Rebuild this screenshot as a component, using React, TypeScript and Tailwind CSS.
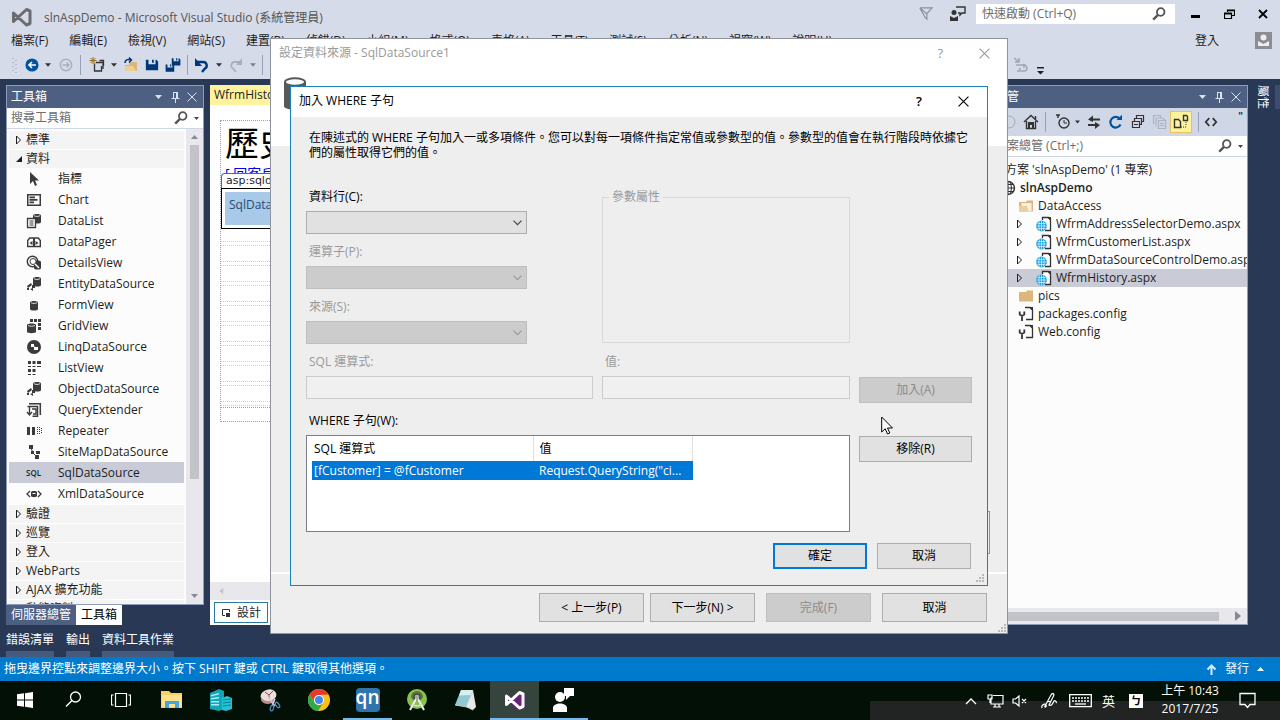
import React from "react";

type Kids = { children?: React.ReactNode };

function Svg({ s = 16, w, h, vb, className = "", children }: Kids & { s?: number; w?: number; h?: number; vb?: string; className?: string }) {
  return (
    <svg width={w ?? s} height={h ?? s} viewBox={vb ?? "0 0 16 16"} fill="none" className={"shrink-0 " + className} aria-hidden="true">
      {children}
    </svg>
  );
}

const Caret = ({ className = "" }: { className?: string }) => (
  <Svg w={7} h={4} vb="0 0 7 4" className={className}><path d="M0 0h7L3.5 4z" fill="currentColor" /></Svg>
);
const Pin = () => (
  <Svg s={11} vb="0 0 11 11"><path d="M3 .5h5M3.5.5v5.5M7.5.5v5.5M6.5.5v5.5M1.5 6.5h8M5.5 7v4" stroke="currentColor" /></Svg>
);
const Cross = ({ s = 10 }: { s?: number }) => (
  <Svg s={s} vb="0 0 10 10"><path d="M.5.5l9 9M9.5.5l-9 9" stroke="currentColor" /></Svg>
);
const Search = () => (
  <Svg s={14} vb="0 0 14 14" className="text-[#555]"><circle cx="8.7" cy="5" r="3.8" stroke="currentColor" strokeWidth="1.8" /><path d="M6 7.8L1.2 12.6" stroke="currentColor" strokeWidth="2.4" /></Svg>
);
const Expander = ({ open = false }: { open?: boolean }) => (
  <Svg w={8} h={10} vb="0 0 8 10">
    {open ? <path d="M7 2v6H1z" fill="#1e1e1e" /> : <path d="M1.5 1v8L5.5 5z" stroke="#1e1e1e" />}
  </Svg>
);
const Grip = () => (
  <Svg s={9} vb="0 0 9 9"><path d="M6 0h2v2H6zM6 3h2v2H6zM3 3h2v2H3zM6 6h2v2H6zM3 6h2v2H3zM0 6h2v2H0z" fill="#b9b9b9" /></Svg>
);
const Vs = ({ color, shade }: { color: string; shade?: string }) => (
  <Svg s={22} vb="0 0 22 22">
    {shade && <path d="M2 9l11 12h4l4-2V4z" fill={shade} />}
    <path d="M2.500 7v8.500L15.500 3.500l3.500 1.500v12.500l-3.500 1.500z" stroke={color} strokeWidth="3" strokeLinejoin="round" />
  </Svg>
);
const Cylinder = ({ x, y }: { x: number; y: number }) => (
  <g>
    <path d={`M${x} ${y + 1.5}c0-2 8-2 8 0v6.500c0 2-8 2-8 0z`} fill="#3b3b3b" />
    <path d={`M${x + 1} ${y + 1.7}c1.500 1 4.500 1 6 0`} stroke="#fff" strokeWidth=".8" />
  </g>
);
const dots = "M1 10l4-3 1 2-4 3zM6 9h3v3H6zM4 13l3-1v3zM1 12h2v2H1z";

const toolIcons: Record<string, React.ReactNode> = {
  指標: <path d="M4 1v12l3-3 2 5 2-1-2-4.500h4z" fill="#3b3b3b" />,
  Chart: <path fillRule="evenodd" d="M1 2h14v12H1zM2.500 3.500v9h11v-9zM3.500 4.500H9v1.700H3.500zM3.500 7h8v1.700h-8zM3.500 9.600H8v1.700H3.500z" fill="#3b3b3b" />,
  DataList: <><Cylinder x={7} y={1} /><path d="M1.500 5.500h8v9h-8z" fill="#fff" stroke="#3b3b3b" strokeWidth="1.300" /><path d="M3.500 8h4M3.500 10h4M3.500 12h4" stroke="#3b3b3b" /></>,
  DataPager: <><path d="M1.700 12.500v-6l2-2.500h4v8.500zM8.300 12.500V4h4l2 2.500v6z" stroke="#3b3b3b" strokeWidth="1.400" /><path d="M6.500 7v4l-3-2zM9.500 7v4l3-2z" fill="#3b3b3b" /></>,
  DetailsView: <><path d="M8 7c0-2 7-2 7 0v6c0 2-7 2-7 0z" fill="#3b3b3b" /><circle cx="6.500" cy="6.500" r="5.200" stroke="#3b3b3b" strokeWidth="1.500" /><circle cx="7" cy="6.500" r="3" fill="#fff" stroke="#3b3b3b" /><path d="M9 9l4 4" stroke="#fff" strokeWidth="1.500" /></>,
  EntityDataSource: <><Cylinder x={7} y={1} /><path d={dots} fill="#3b3b3b" /></>,
  FormView: <Cylinder x={4} y={4} />,
  GridView: <><path d="M4 1h3v3H4zM8 1h3v3H8zM12 1h3v3h-3zM12 5h3v3h-3zM12 9h3v3h-3z" fill="#3b3b3b" /><path d="M1 7c0-2 9-2 9 0v7c0 1.500-9 1.500-9 0z" fill="#3b3b3b" /><path d="M2 7.500c2 1 5 1 7 0" stroke="#fff" strokeWidth=".8" /></>,
  LinqDataSource: <><circle cx="8" cy="8" r="7" fill="#3b3b3b" /><path d="M5 5h3v3H5zM8 8h4v3H8z" fill="#fff" /><path d="M7 7l3 2" stroke="#fff" /></>,
  ListView: <path d="M2 1h3v3H2zM6.500 1h3v3h-3zM11 1h4v3h-4zM2 6h3v1H2zM6.500 6h3v1h-3zM11 6h4v1h-4zM2 9h3v3H2zM6.500 9h3v3h-3zM2 14h3v1H2zM6.500 14h3v1h-3z" fill="#3b3b3b" />,
  ObjectDataSource: <><Cylinder x={7} y={1} /><path d={dots} fill="#3b3b3b" /></>,
  QueryExtender: <><path d="M3 1.700h11.300V13M1.500 4.500h10v9.800h-5" stroke="#3b3b3b" strokeWidth="1.500" /><path d="M3.500 5v7M1 10l2.500 3L6 10M6 7h4v5H7" stroke="#3b3b3b" strokeWidth="1.400" /></>,
  Repeater: <path d="M1 4h3v8H1zM6 4h3v8H6zM11 4h1v1h-1zM13 4h1v1h-1zM11 6h1v1h-1zM13 6h1v1h-1zM11 8h1v1h-1zM13 8h1v1h-1zM11 10h1v1h-1zM13 10h1v1h-1zM15 5h1v1h-1zM15 7h1v1h-1zM15 9h1v1h-1z" fill="#3b3b3b" />,
  SiteMapDataSource: <><path d="M3 1h4v4H3zM5 7h3v3H5zM10 7h4v3h-4zM9 11h4v4H9z" fill="#3b3b3b" /><path d="M5 4l2 5 4 4" stroke="#3b3b3b" /></>,
  XmlDataSource: <><path d="M4 5L1 8l3 3M12 5l3 3-3 3" stroke="#3b3b3b" strokeWidth="1.300" /><path d="M5 6c0-1.500 6-1.500 6 0v4c0 1.500-6 1.500-6 0z" fill="#3b3b3b" /><path d="M6.500 7.500h3" stroke="#fff" /></>,
};

const tools = ["指標", "Chart", "DataList", "DataPager", "DetailsView", "EntityDataSource", "FormView", "GridView", "LinqDataSource", "ListView", "ObjectDataSource", "QueryExtender", "Repeater", "SiteMapDataSource", "SqlDataSource", "XmlDataSource"];

function GroupRow({ name, open = false }: { name: string; open?: boolean }) {
  return (
    <button className="flex h-[19px] w-full shrink-0 items-center gap-[3px] border-t border-white bg-[#f4f4f5] pl-1.5 text-left whitespace-nowrap">
      <Expander open={open} />{name}
    </button>
  );
}

function PanelTitle({ title }: { title: string }) {
  return (
    <div className="flex h-[22px] shrink-0 items-center justify-between bg-[#4d6082] pr-1.5 pl-1 text-white">
      <h2>{title}</h2>
      <div className="flex items-center gap-1.5 text-[#dce3f0]">
        <button aria-label="選項" className="pr-0.5"><Caret /></button>
        <button aria-label="釘選"><Pin /></button>
        <button aria-label="關閉"><Cross /></button>
      </div>
    </div>
  );
}

function SearchBox({ text }: { text: string }) {
  return (
    <div className="flex h-[21px] shrink-0 items-center gap-1.5 border-b border-[#cfd6e5] bg-white px-1 text-[#666]">
      <input aria-label={text} placeholder={text} className="min-w-0 flex-1 bg-transparent outline-none placeholder:text-[#6d6d6d]" />
      <Search /><Caret className="h-[3px] w-[5px] text-[#444]" />
    </div>
  );
}

function Toolbox() {
  return (
    <aside className="flex w-[198px] shrink-0 flex-col">
      <section className="flex min-h-0 flex-1 flex-col border border-[#8e9bbc] bg-[#fcfcfc]">
        <PanelTitle title="工具箱" />
        <SearchBox text="搜尋工具箱" />
        <div className="flex min-h-0 flex-1">
          <div className="flex min-w-0 flex-1 flex-col overflow-hidden px-0.5 pt-px">
            <GroupRow name="標準" /><GroupRow name="資料" open />
            {tools.map((t) => (
              <button key={t} className={"flex h-[21px] w-full shrink-0 items-center gap-4 pl-[17px] text-left whitespace-nowrap " + (t === "SqlDataSource" ? "bg-[#c9cbd7]" : "")}>
                {t === "SqlDataSource" ? <span className="w-4 text-[8px] font-semibold">SQL</span> : <Svg>{toolIcons[t]}</Svg>}
                {t}
              </button>
            ))}
            {["驗證", "巡覽", "登入", "WebParts", "AJAX 擴充功能", "動態資料"].map((g) => <GroupRow key={g} name={g} />)}
          </div>
          <div className="flex w-[17px] flex-col items-center bg-[#e8e8ec] py-1.5 text-[#868999]">
            <Caret className="rotate-180" />
            <div className="mt-1.5 h-[334px] w-[9px] bg-[#c2c3c9]" />
            <Caret className="mt-auto" />
          </div>
        </div>
      </section>
      <div className="flex h-5 text-white">
        <button className="bg-[#4d6082] px-[5px]">伺服器總管</button>
        <button className="bg-white px-[5px] text-black">工具箱</button>
      </div>
    </aside>
  );
}

function Designer() {
  return (
    <main className="flex min-w-0 flex-1 flex-col">
      <div className="flex h-5 shrink-0">
        <button className="bg-[#fff29d] px-1 text-[#1e1e1e]">WfrmHistory.aspx</button>
      </div>
      <div className="flex min-h-0 flex-1 flex-col bg-white">
        <div className="mt-[15px] ml-2.5 flex flex-col border-t border-l border-dotted border-[#9aa3b5]">
          <h1 className="h-[44px] overflow-hidden pl-1 text-[34px] leading-[44px] text-black">歷史訂單</h1>
          <a href="#back" className="ml-1 h-2 overflow-hidden text-[14px] leading-[18px] text-[#0000ee] underline">[ 回客戶清單 ]</a>
          <div className="flex h-[15px] w-24 items-center rounded-t border border-b-0 border-[#3a6ea5] bg-white pl-1 font-['DejaVu_Sans'] text-[11px] whitespace-nowrap">asp:sqldatasource</div>
          <div className="h-[41px] border border-black p-[3px]">
            <div className="h-full bg-[#a9c9e8] pt-1 pl-1 text-[#1f4e79]">SqlDataSource - SqlDataSource1</div>
          </div>
          <div className="flex flex-col gap-[15px] border-b border-dotted border-[#9aa3b5] pt-3 pb-px">
            {[0, 1, 2, 3, 4, 5, 6, 7, 8].map((i) => <div key={i} className="h-[5px] border-y border-dotted border-[#c9cfda]" />)}
          </div>
          <div className="h-[14px] border-b border-dotted border-[#9aa3b5]" />
        </div>
        <div className="mt-auto flex h-[18px] items-center bg-[#e8e8ec] pl-2 text-[#c2c3c9]"><Caret className="rotate-90" /></div>
        <div className="flex h-[25px] items-center pl-1">
          <button className="flex h-[21px] items-center gap-1.5 border border-[#2b7a9e] bg-white px-1.5">
            <Svg s={10} vb="0 0 10 10"><path d="M4 7.500H1.500v-6h7V4" stroke="#333" /><path d="M5 5h4v4H5z" fill="#333" /></Svg>設計
          </button>
        </div>
      </div>
    </main>
  );
}

const Aspx = () => (
  <Svg><path d="M6.500 4V1.500h6l2 2.500v10.500H9" fill="#fff" stroke="#333" strokeWidth="1.300" /><path d="M11 1h4v4z" fill="#333" /><circle cx="5.500" cy="10" r="5.400" fill="#1ba1e2" /><path d="M5.500 5v10M.5 10h10M1.500 7.500h8M1.500 12.500h8M3.500 5.500q-1.500 4.500 0 9M7.500 5.500q1.500 4.500 0 9" stroke="#fff" strokeWidth=".6" /></Svg>
);
const Folder = ({ open = false }: { open?: boolean }) => (
  <Svg><path d="M1 4h7l1-1.500h6v11H1z" fill="#dcb67a" />{open && <path d="M3.500 5h10v8h-3l-2-5h-5z" fill="#fff" opacity=".8" />}{open && <path d="M1 13.500V8h7l3 5.500z" fill="#e9cf9f" />}</Svg>
);
const Config = () => (
  <Svg><path d="M7 1.500h5l2.500 2.500v9.500H8" stroke="#333" strokeWidth="1.300" /><path d="M11 1h4v4z" fill="#333" /><path d="M1.700 5.500v3l2.300 1.500 2.300-1.500v-3M4 9v6" stroke="#333" strokeWidth="1.800" /></Svg>
);

function TreeRow({ icon, name, pad, exp, sel, bold }: { icon: React.ReactNode; name: string; pad: string; exp?: boolean; sel?: boolean; bold?: boolean }) {
  return (
    <button className={"flex h-[18px] w-full shrink-0 items-center gap-1 text-left whitespace-nowrap text-[#1e1e1e] " + pad + (sel ? " bg-[#c9cbd7]" : "") + (bold ? " font-semibold" : "")}>
      {exp && <span className="mr-2 flex"><Expander /></span>}
      {icon}{name}
    </button>
  );
}

function Solution() {
  return (
    <aside className="flex w-[282px] shrink-0 flex-col border border-[#8e9bbc] bg-[#fcfcfc]">
      <PanelTitle title="方案總管" />
      <div className="flex h-7 shrink-0 items-center gap-1.5 bg-[#cfd6e5] pr-1 pl-3 text-[#333]">
        <Svg><circle cx="8" cy="8" r="6" stroke="#aaa" /></Svg>
        <Svg><circle cx="8" cy="8" r="6" stroke="#aaa" /></Svg>
        <button aria-label="首頁" className="ml-auto"><Svg><path d="M1 8l7-6.500L15 8M3.500 7v7.500h9V7M12.500 2v3" stroke="#333" strokeWidth="1.400" /><path d="M5 8h6v6H9v-3H7v3H5z" fill="#333" /></Svg></button>
        <span className="h-5 w-px bg-[#97a0b5]" />
        <button aria-label="暫止的變更" className="ml-1 flex items-center gap-1"><Svg><path d="M1 1h4M3 1v3" stroke="#333" strokeWidth="1.500" /><circle cx="9" cy="9" r="5" stroke="#333" strokeWidth="1.400" /><path d="M9 6v3h3" stroke="#333" /></Svg><Caret className="w-[5px]" /></button>
        <button aria-label="同步"><Svg><path d="M14 5.500H4M2 11h10" stroke="#333" strokeWidth="2" /><path d="M7 1.500L2 5.500l5 2.500zM9 8l5 3-5 4z" fill="#333" /></Svg></button>
        <button aria-label="重新整理"><Svg><path d="M12.500 10.500a5.300 5.300 0 1 1-1-6" stroke="#00539c" strokeWidth="2.200" /><path d="M8.500 6H14V.8z" fill="#00539c" /></Svg></button>
        <button aria-label="全部摺疊"><Svg><path d="M2.500 7.500h7v6h-7zM4.500 7V4.500h7v6H10M6.500 4V1.500h7v6H12M4 10.500h4" stroke="#333" strokeWidth="1.200" /></Svg></button>
        <button aria-label="顯示所有檔案"><Svg><path d="M1.500 10V1.500h7V4M4 12.500V4h6l3 2M6.500 6.500h7v8h-7zM8 9.500h4M8 11.500h4" stroke="#aeb4c1" strokeWidth="1.200" /></Svg></button>
        <button aria-label="預覽" className="-ml-1 border border-[#e5c365] bg-[#fff29d] p-[2px]"><Svg><path d="M1.500 5.500h4l2 2v6h-6zM10.500 1.500h3l1 1v4h-4z" stroke="#333" strokeWidth="1.400" /><path d="M8 13h1m1 0h1m1 0h1m0-2v-1m0-1V8" stroke="#333" /></Svg></button>
        <span className="h-5 w-px bg-[#97a0b5]" />
        <button aria-label="檢視程式碼"><Svg s={14}><path d="M6 3.500L2 8l4 4.500M10 3.500l4 4.500-4 4.500" stroke="#333" strokeWidth="2" /></Svg></button>
        <span className="mb-3 ml-3.5 text-[10px] leading-none font-bold">"</span>
      </div>
      <SearchBox text="搜尋方案總管 (Ctrl+;)" />
      <div className="flex min-h-0 flex-1 flex-col overflow-hidden pt-1">
        <TreeRow pad="pl-[18px]" icon={<Svg><path d="M2 2h12v12H2z" stroke="#68217a" /></Svg>} name="方案 'slnAspDemo' (1 專案)" />
        <TreeRow bold pad="pl-[33px]" icon={<Svg><circle cx="8" cy="8" r="6.500" stroke="#333" strokeWidth="1.400" /><path d="M8 1.500v13M1.500 8h13M3 4.500h10M3 11.500h10M5.500 2.500q-2 5.500 0 11M10.500 2.500q2 5.500 0 11" stroke="#333" /></Svg>} name="slnAspDemo" />
        <TreeRow pad="pl-[51px]" icon={<Folder open />} name="DataAccess" />
        <TreeRow exp pad="pl-[49px]" icon={<Aspx />} name="WfrmAddressSelectorDemo.aspx" />
        <TreeRow exp pad="pl-[49px]" icon={<Aspx />} name="WfrmCustomerList.aspx" />
        <TreeRow exp pad="pl-[49px]" icon={<Aspx />} name="WfrmDataSourceControlDemo.aspx" />
        <TreeRow exp sel pad="pl-[49px]" icon={<Aspx />} name="WfrmHistory.aspx" />
        <TreeRow pad="pl-[51px]" icon={<Folder />} name="pics" />
        <TreeRow pad="pl-[51px]" icon={<Config />} name="packages.config" />
        <TreeRow pad="pl-[51px]" icon={<Config />} name="Web.config" />
      </div>
      <div className="flex h-4 shrink-0 items-center justify-between bg-[#e8e8ec] pr-1.5 pl-5 text-[#868999]">
        <div className="h-[9px] w-[232px] bg-[#c2c3c9]" />
        <Svg w={6} h={10} vb="0 0 6 10"><path d="M0 0l6 5-6 5z" fill="currentColor" /></Svg>
      </div>
    </aside>
  );
}

const btn = "border border-[#adadad] bg-[#e1e1e1] text-black";
const btnOff = "border border-[#bfbfbf] bg-[#cccccc] text-[#8b8b8b]";

function Picker({ id, label, off = false }: { id: string; label: string; off?: boolean }) {
  return (
    <div className="flex flex-col gap-[5px]">
      <label htmlFor={id} className={"pl-[3px] leading-[18px] " + (off ? "text-[#9a9a9a]" : "")}>{label}</label>
      <div className={"grid h-[23px] items-center border " + (off ? "border-[#bfbfbf] bg-[#cccccc] text-[#9a9a9a]" : "border-[#adadad] bg-[#e1e1e1] text-[#444]")}>
        <select id={id} disabled={off} className="col-start-1 row-start-1 h-full w-full appearance-none bg-transparent outline-none"><option></option></select>
        <Svg w={9} h={6} vb="0 0 9 6" className="pointer-events-none col-start-1 row-start-1 mr-1 justify-self-end"><path d="M.5.7l4 4 4-4" stroke="currentColor" strokeWidth="1.200" /></Svg>
      </div>
    </div>
  );
}

function TextField({ id, label }: { id: string; label: string }) {
  return (
    <div className="flex flex-col gap-[5px]">
      <label htmlFor={id} className="pl-[3px] leading-[18px] text-[#9a9a9a]">{label}</label>
      <input id={id} disabled className="h-[23px] border border-[#cccccc] bg-[#f0f0f0] px-1" />
    </div>
  );
}

function WhereDialog() {
  return (
    <div role="dialog" aria-label="加入 WHERE 子句" className="absolute top-[86px] left-[290px] flex h-[500px] w-[698px] flex-col border border-[#1883b5] bg-[#eeeeee] text-black">
      <header className="flex h-[30px] shrink-0 items-center bg-white pr-[18px] pb-0.5 pl-2">
        <h2 className="flex-1">加入 WHERE 子句</h2>
        <button aria-label="說明" className="mr-9 text-[13px] font-semibold">?</button>
        <button aria-label="關閉"><Cross s={11} /></button>
      </header>
      <div className="flex flex-1 flex-col px-[15px] pt-[13px]">
        <p className="h-[58px] pr-px pl-[3px] leading-[15px]">在陳述式的 WHERE 子句加入一或多項條件。您可以對每一項條件指定常值或參數型的值。參數型的值會在執行階段時依據它們的屬性取得它們的值。</p>
        <div className="grid grid-cols-[287fr_248fr_113fr] gap-x-[9px]">
          <div className="flex flex-col gap-[9px] pr-[66px]">
            <Picker id="col" label="資料行(C):" />
            <Picker id="op" label="運算子(P):" off />
            <Picker id="src" label="來源(S):" off />
          </div>
          <fieldset className="mb-px border border-[#d8d8d8] px-1.5 text-[#9a9a9a]"><legend className="px-[3px] leading-[18px]">參數屬性</legend></fieldset>
          <span />
        </div>
        <div className="mt-[9px] grid grid-cols-[287fr_248fr_113fr] items-end gap-x-[9px]">
          <TextField id="expr" label="SQL 運算式:" />
          <TextField id="val" label="值:" />
          <button disabled className={"-mb-1 h-[26px] " + btnOff}>加入(A)</button>
        </div>
        <div className="mt-[13px] mb-[5px] pl-[3px] leading-[18px]" id="where">WHERE 子句(W):</div>
        <div className="grid grid-cols-[544fr_113fr] items-start gap-x-[9px]">
          <div className="h-[97px] border border-[#7a7f86] bg-white pl-[5px]">
            <table aria-labelledby="where" className="w-[381px] table-fixed border-collapse text-left">
              <thead>
                <tr className="h-[25px]"><th className="w-[221px] border-r border-[#e0e0e0] px-0.5 font-normal">SQL 運算式</th><th className="border-r border-[#e0e0e0] px-1.5 font-normal">值</th></tr>
              </thead>
              <tbody>
                <tr className="h-[19px] bg-[#0078d7] leading-[19px] text-white"><td className="px-0.5">[fCustomer] = @fCustomer</td><td className="px-1.5 whitespace-nowrap">Request.QueryString("ci...</td></tr>
              </tbody>
            </table>
          </div>
          <button className={"mt-px h-[26px] " + btn}>移除(R)</button>
        </div>
        <div className="mt-[11px] flex justify-end gap-2.5 pr-px">
          <button className="h-[26px] w-[94px] border-2 border-[#0078d7] bg-[#e1e1e1]">確定</button>
          <button className={"h-[26px] w-[94px] " + btn}>取消</button>
        </div>
      </div>
      <div className="absolute right-0.5 bottom-0.5"><Grip /></div>
    </div>
  );
}

function WizardDialog() {
  return (
    <div role="dialog" aria-label="設定資料來源" className="absolute top-[38px] left-[270px] flex h-[596px] w-[738px] flex-col border border-[#8f949e] bg-[#eeeeee]">
      <header className="flex h-7 shrink-0 items-center bg-white pr-[17px] pl-2 text-[#9a9a9a]">
        <h2 className="flex-1">設定資料來源 - SqlDataSource1</h2>
        <button aria-label="說明" className="mr-9 text-[13px]">?</button>
        <button aria-label="關閉"><Cross s={11} /></button>
      </header>
      <div className="h-[79px] shrink-0 bg-white pt-2.5 pl-3">
        <Svg w={24} h={34} vb="0 0 24 34"><path d="M1 5v24c0 5 22 5 22 0V5" fill="#58595b" /><ellipse cx="12" cy="5" rx="10" ry="3.800" fill="#fff" stroke="#58595b" strokeWidth="2" /></Svg>
      </div>
      <div className="flex flex-1 items-end justify-end border-b-2 border-white pr-[17px] pb-[18px]"><span className="h-[43px] w-20 border border-[#8f949e]" /></div>
      <footer className="flex h-[59px] shrink-0 items-start justify-end gap-[11px] pt-[19px] pr-5">
        <div className="flex gap-1.5">
          <button className={"h-[29px] w-[105px] " + btn}>&lt; 上一步(P)</button>
          <button className={"h-[29px] w-[105px] " + btn}>下一步(N) &gt;</button>
        </div>
        <button disabled className={"h-[29px] w-[105px] " + btnOff}>完成(F)</button>
        <button className={"h-[29px] w-[105px] " + btn}>取消</button>
      </footer>
      <div className="absolute right-0 bottom-0"><Grip /></div>
    </div>
  );
}

const Floppy = () => <path d="M1 2h12l2 2v10H1zM4 2v5h8V2h-2v3.500H8V2z" fill="#00397a" fillRule="evenodd" />;

function TopBars() {
  return (
    <header className="shrink-0 bg-[#d6dbe9] text-[#1e1e1e]">
      <div className="flex h-7 items-center pr-2 pl-[11px]">
        <div className="pt-1.5"><Vs color="#6c6c70" /></div>
        <h1 className="ml-[11px] flex-1 pt-2 text-[#555]">slnAspDemo - Microsoft Visual Studio (系統管理員)</h1>
        <Svg s={14} className="mr-[17px]"><path d="M1 1h14L9 7.500V14L7 12 1 1l8 7" stroke="#8b8f99" strokeWidth="1.300" /></Svg>
        <Svg s={16} className="mr-2.5"><path d="M6 1h9v6h-3l-2 2V7H8" stroke="#333" strokeWidth="1.400" /><circle cx="4" cy="6.500" r="2.500" fill="#333" /><path d="M0 15v-5l4 2 4-2v5z" fill="#333" /></Svg>
        <label className="flex h-5 w-[199px] items-center bg-white pr-[9px] pl-1.5">
          <input aria-label="快速啟動" placeholder="快速啟動 (Ctrl+Q)" className="min-w-0 flex-1 bg-transparent outline-none placeholder:text-[#6d6d6d]" /><Search />
        </label>
        <div className="ml-4 flex items-center gap-[23px] pr-1 text-black">
          <button aria-label="最小化"><Svg s={10} vb="0 0 10 10"><path d="M0 6h9v3H0z" fill="currentColor" /></Svg></button>
          <button aria-label="還原"><Svg s={11} vb="0 0 11 11"><path d="M3.500 3V1h7v5.500H8M.5 4h7v5.500h-7zM.5 5h7M3.500 1.700h7" stroke="currentColor" strokeWidth="1.200" /></Svg></button>
          <button aria-label="關閉"><Svg s={10} vb="0 0 10 10"><path d="M1 1l8 8M9 1L1 9" stroke="currentColor" strokeWidth="1.800" /></Svg></button>
        </div>
      </div>
      <nav className="flex h-[25px] items-center pl-[11px]">
        {["檔案(F)", "編輯(E)", "檢視(V)", "網站(S)", "建置(B)", "偵錯(D)", "小組(M)", "格式(O)", "表格(A)", "工具(T)", "測試(S)", "分析(N)", "視窗(W)", "說明(H)"].map((m) => (
          <button key={m} className="min-w-[58px] shrink-0 pr-[21px] text-left whitespace-nowrap">{m}</button>
        ))}
        <button className="mr-9 ml-auto">登入</button>
        <Svg s={17} vb="0 0 17 17" className="mr-2"><path d="M0 0h17v17H0z" fill="#8b8d93" /><circle cx="8.500" cy="5.500" r="3" fill="#eee" /><path d="M3 14V9l5.500 3L14 9v5z" fill="#eee" /></Svg>
      </nav>
      <div className="flex h-[26px] items-center pb-0.5 pl-3 text-[#333]">
        <Svg w={5} h={17} vb="0 0 5 17"><path d="M1 1v16M4 3v14" stroke="#8d96aa" strokeDasharray="1 3" /></Svg>
        <button aria-label="上一頁" className="ml-2 flex items-center gap-1.5"><Svg s={14}><circle cx="8" cy="8" r="7.500" fill="#00539c" /><path d="M12.500 8H5M8 4.500L4.500 8 8 11.500" stroke="#fff" strokeWidth="1.800" /></Svg><Caret className="w-[6px]" /></button>
        <Svg s={14} className="ml-2"><circle cx="8" cy="8" r="6.500" stroke="#a9afbd" strokeWidth="1.600" /><path d="M4 8h7M8.500 5l3 3-3 3" stroke="#a9afbd" strokeWidth="1.500" /></Svg>
        <span className="mr-2 ml-[7px] h-5 w-px bg-[#97a0b5]" />
        <button aria-label="新增" className="flex items-center gap-1.5"><Svg><path d="M5.500 6.500V14h7V9M7 5.500h4l3 0V12M10.500 3.500h4V9" stroke="#333" strokeWidth="1.300" /><path d="M4 0v7M.5 3.500h7M1.500 1l5 5M6.500 1l-5 5" stroke="#a0701a" /></Svg><Caret className="w-[6px]" /></button>
        <button aria-label="開啟" className="ml-1.5"><Svg><path d="M2 8h4V5h8v9H2z" fill="#dcb67a" /><path d="M2 14V9h8l3 5z" fill="#f0cf90" /><path d="M2 6c0-4 4-4 6-3M6 .5L8.500 3 6 5.500" stroke="#00397a" strokeWidth="1.500" /></Svg></button>
        <button aria-label="儲存" className="ml-1.5"><Svg s={14}><Floppy /></Svg></button>
        <button aria-label="全部儲存" className="ml-1.5"><Svg s={16} vb="0 0 26 26"><g transform="translate(10 0)"><Floppy /></g><g transform="translate(0 10)"><Floppy /></g></Svg></button>
        <span className="mx-1.5 h-5 w-px bg-[#97a0b5]" />
        <button aria-label="復原" className="flex items-center gap-1.5 text-[#00397a]"><Svg><path d="M3 5h6.500a3.500 3.500 0 0 1 1.500 6.500L8 15" stroke="currentColor" strokeWidth="2.400" /><path d="M1 1v8h7z" fill="currentColor" /></Svg><Caret className="w-[6px] text-[#333]" /></button>
        <button aria-label="重做" className="ml-1.5 flex items-center gap-1.5 text-[#a9afbd]"><Svg><path d="M13 5H6.500A3.500 3.500 0 0 0 5 11.500L8 15" stroke="currentColor" strokeWidth="1.800" /><path d="M14 1v7H8z" fill="currentColor" /></Svg><Caret className="w-[6px] text-[#7d8290]" /></button>
        <span className="mx-1.5 h-5 w-px bg-[#97a0b5]" />
        <div className="mr-[236px] ml-auto flex items-end gap-2">
          <Svg><path d="M1 1l5 4M6 1v4H2M3 8h8v3M4 14h3v-3M9 8c5-2 7 6 2 6H8" stroke="#a3a8b4" strokeWidth="1.600" /></Svg>
          <Svg w={7} h={8} vb="0 0 7 8" className="-mb-0.5"><path d="M0 0h7v1.500H0zM0 4h7L3.500 7.500z" fill="#222" /></Svg>
        </div>
      </div>
    </header>
  );
}

function TaskSlot({ children, state = "" }: Kids & { state?: string }) {
  return <button className={"flex w-[49px] justify-center border-b-2 " + (state || "border-transparent")}><span className="flex h-[37px] items-center">{children}</span></button>;
}

function Taskbar() {
  return (
    <footer className="relative flex h-[39px] shrink-0 items-stretch bg-[#031006] text-white">
      <div className="absolute right-0 bottom-0 h-[19px] w-[410px] bg-[#222423]" />
      <TaskSlot><Svg s={16}><path d="M0 2.300L7 1.300V7.500H0zM8 1.200L16 0v7.500H8zM0 8.500h7v6.200L0 13.700zM8 8.500h8V16L8 14.800z" fill="#fff" /></Svg></TaskSlot>
      <TaskSlot><Svg s={17} vb="0 0 17 17"><circle cx="10.500" cy="6" r="5" stroke="#fff" strokeWidth="1.300" /><path d="M7 9.500L1 15.500" stroke="#fff" strokeWidth="1.500" /></Svg></TaskSlot>
      <TaskSlot><Svg w={20} h={16} vb="0 0 20 16" className="mr-1"><path d="M4.500 1.500h11v13h-11zM2.500 3H.5v10h2M17.500 3h2v10h-2" stroke="#fff" strokeWidth="1.200" /></Svg></TaskSlot>
      <TaskSlot><Svg w={22} h={19} vb="0 0 22 19"><path d="M0 1h8l2 2h11v15H0z" fill="#f6cf66" /><path d="M1 5h20v12H1z" fill="#ffe08d" /><path d="M4 18v-7h14v7h-4v-4H8v4z" fill="#3fa7df" /></Svg></TaskSlot>
      <TaskSlot><Svg w={22} h={22} vb="0 0 22 22"><path d="M0 4l9-4 5 2v18l-5 2-9-2z" fill="#12a5b8" /><path d="M12 9l5-2 5 2v11l-6 2-4-1z" fill="#21c2d2" /><path d="M1 6l8-2v1.500L1 7.500zM1 9l8-1v1.500l-8 1zM1 12h8v1.500H1zM1 15h8v1.500H1zM1 18l8 1" fill="#a8eef5" /><path d="M13 11l8-1M13 14l8-1M13 17l8-1" stroke="#0b7f91" /></Svg></TaskSlot>
      <TaskSlot><Svg w={22} h={24} vb="0 0 22 24"><ellipse cx="9.500" cy="7.500" rx="8" ry="6" transform="rotate(-15 9.500 7.500)" fill="#e9e0dd" /><path d="M2 9c3 5 10 5 14 1v3c-4 4-12 4-14-1z" fill="#c08a86" /><path d="M6 4l4 3 4-4M10 7v3" stroke="#b53a37" /><path d="M9 9l7 9M16 11l-3 7" stroke="#ccd" strokeWidth="1.500" /><ellipse cx="18.500" cy="17" rx="1.600" ry="3" transform="rotate(-35 18.500 17)" stroke="#4a8fc4" strokeWidth="1.300" /><ellipse cx="13" cy="20" rx="1.600" ry="3" transform="rotate(15 13 20)" stroke="#4a8fc4" strokeWidth="1.300" /></Svg></TaskSlot>
      <TaskSlot><Svg s={22} vb="0 0 22 22"><circle cx="11" cy="11" r="11" fill="#fbc116" /><path d="M1.500 5.500a11 11 0 0 1 19 0L11 6a5 5 0 0 0-4.500 7.300z" fill="#e33b2e" /><path d="M1.500 5.500A11 11 0 0 0 10 22l5.300-8.500a5 5 0 0 1-8.800 0z" fill="#2da94f" /><circle cx="11" cy="11" r="5" fill="#fff" /><circle cx="11" cy="11" r="4" fill="#4285f4" /></Svg></TaskSlot>
      <TaskSlot state="border-[#76b9ed]"><span className="flex h-6 w-6 items-center justify-center rounded bg-[#2e74ad] pb-1 text-[19px] leading-none font-semibold">qn</span></TaskSlot>
      <TaskSlot><Svg w={22} h={24} vb="0 0 22 24"><circle cx="11" cy="11" r="10" fill="#8dc04c" /><path d="M5 9a6 6 0 0 1 12 0l-2 3H7z" fill="#53763a" /><circle cx="11" cy="9" r="3" fill="#aaa" stroke="#333" /><path d="M10 11L4 22M12 11l6 11" stroke="#eee" strokeWidth="2" /><path d="M6 16q5 4 10 0" stroke="#ddd" strokeWidth="1.500" /></Svg></TaskSlot>
      <TaskSlot><Svg w={24} h={22} vb="0 0 24 22"><path d="M7 1h12l-6 17L1 16z" fill="#8fc9d4" /><path d="M7 1h12l-2 5-12 .500z" fill="#d9eef1" /><path d="M19 1l3 17-3 3-7-3z" fill="#e8e8e8" /><path d="M1 16l12 2 6 3" stroke="#ccc" /></Svg></TaskSlot>
      <TaskSlot state="border-[#76b9ed] bg-[#35453d]"><Vs color="#ffffff" shade="#68217a" /></TaskSlot>
      <TaskSlot state="border-[#76b9ed]"><Svg w={22} h={24} vb="0 0 22 24"><circle cx="7" cy="9" r="5" fill="#fff" /><path d="M0 24v-4c0-6 14-6 14 0v4zM11 0h10v8h-4l-4 4V8h-2z" fill="#fff" /></Svg></TaskSlot>
      <div className="relative ml-auto flex items-center">
        <Svg w={12} h={8} vb="0 0 12 8"><path d="M1 7l5-5 5 5" stroke="#fff" strokeWidth="1.300" /></Svg>
        <Svg className="ml-2.5" w={17} h={14} vb="0 0 17 14"><path d="M4 3.500V10h12V1.500H6M8 10v3M12 10v3M6 13h8M1 1h4v4H1zM3 5v4" stroke="#fff" strokeWidth="1.200" /></Svg>
        <Svg className="ml-2" w={15} h={12} vb="0 0 15 12"><path d="M1 4h2.500L7 1v10L3.500 8H1zM10 4l4 4M14 4l-4 4" stroke="#fff" strokeWidth="1.200" /></Svg>
        <Svg className="ml-3.5" w={16} h={16}><path d="M1 15c-1-3 3-5 4-3s-2 3-1 1L10 2c2-3 4-1 2 2L8 12c3 2 4-3 5-4s3 1 2 2M6 9l4-1" stroke="#fff" strokeWidth="1.200" /></Svg>
        <Svg className="ml-3" w={23} h={14} vb="0 0 23 14"><path d="M.7.7h21.600v12H.7z" stroke="#fff" strokeWidth="1.300" /><path d="M3 4h17M3 7h17" stroke="#fff" strokeWidth="1.500" strokeDasharray="2 1" /><path d="M6 10h11" stroke="#fff" strokeWidth="1.300" /></Svg>
        <span className="ml-2.5 text-[13px]">英</span>
        <span className="ml-3.5 flex h-3.5 w-3.5 items-center justify-center bg-white text-[11px] leading-none font-bold text-black">ㄅ</span>
        <div className="ml-3.5 w-[66px] pb-0.5 text-center leading-[18px] whitespace-nowrap"><div>上午 10:43</div><div>2017/7/25</div></div>
        <Svg className="mr-6 ml-4" s={17} vb="0 0 17 17"><path d="M1 1.500h15v11h-5L8.500 15.500 6 12.500H1z" stroke="#fff" strokeWidth="1.300" /></Svg>
      </div>
    </footer>
  );
}

export default function App() {
  return (
    <div className="relative flex h-screen flex-col overflow-hidden bg-[#293955] font-['Open_Sans','Noto_Sans_CJK_TC',sans-serif] text-[12px] leading-[18px] text-[#1e1e1e]">
      <TopBars />
      <div className="flex min-h-0 flex-1 gap-1.5 pt-1.5 pl-1.5">
        <Toolbox />
        <Designer />
        <Solution />
        <div className="flex w-[26px] shrink-0 items-start gap-1.5 text-white">
          <button className="ml-[3px] h-6 overflow-hidden leading-[12px] [text-orientation:sideways] [writing-mode:vertical-rl]">屬性</button>
          <span className="h-6 flex-1 bg-[#3c4e70]" />
        </div>
      </div>
      <div className="flex h-8 shrink-0 gap-3 pt-1.5 pl-1.5 text-white">
        {["錯誤清單", "輸出", "資料工具作業"].map((t) => <button key={t} className="border-b-[6px] border-[#465a7d] pb-0.5">{t}</button>)}
      </div>
      <div className="flex h-6 shrink-0 items-center bg-[#007acc] pr-4 pl-1 text-white">
        <span className="flex-1">拖曳邊界控點來調整邊界大小。按下 SHIFT 鍵或 CTRL 鍵取得其他選項。</span>
        <Svg s={11} vb="0 0 11 11"><path d="M5.500 11V2M1.500 5.500l4-4 4 4" stroke="#dce9f5" strokeWidth="2" /></Svg>
        <button className="ml-2 flex items-center gap-2">發行<Caret className="rotate-180" /></button>
      </div>
      <Taskbar />
      <WizardDialog />
      <WhereDialog />
      <div className="absolute top-[416px] left-[881px]"><Svg w={13} h={20} vb="0 0 13 20"><path d="M.7 1v15l3.500-3.300L6.500 18l2.300-1-2.300-5h5z" fill="#fff" stroke="#000" /></Svg></div>
    </div>
  );
}
